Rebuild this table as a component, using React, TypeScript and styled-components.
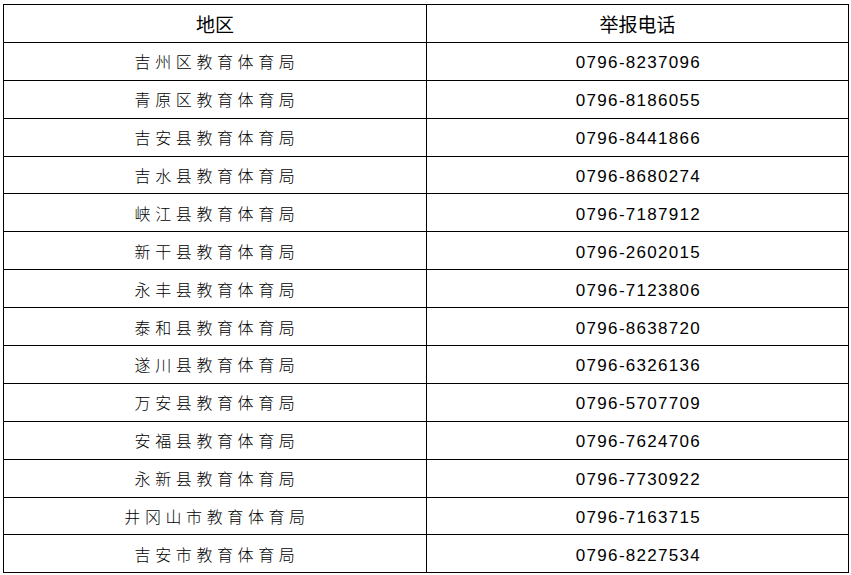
import styled, { createGlobalStyle } from "styled-components";

const GlobalStyle = createGlobalStyle`
    html, body {
        margin: 0;
        padding: 0;
        background: #fff;
    }
`

const Page = styled.div`
    padding: 4px 3px 0 3px;
`

const Table = styled.table`
    width: 845px;
    border-collapse: collapse;
    table-layout: fixed;
    color: #000;
`

const Row = styled.tr`
    height: 37.9px;
`

const HeadCell = styled.th`
    border: 1px solid #000;
    padding: 0;
    font-family: "Noto Sans CJK SC", sans-serif;
    font-size: 19px;
    font-weight: 400;
    text-align: center;
    vertical-align: middle;
`

const Cell = styled.td<{ $mono?: boolean }>`
    border: 1px solid #000;
    padding: ${p => p.$mono ? "3px 0 0 2px" : "0 0 0 4px"};
    text-align: center;
    vertical-align: middle;
    font-family: ${p => p.$mono ? `"Liberation Sans", Arial, sans-serif` : `"Noto Sans CJK SC", sans-serif`};
    font-size: ${p => p.$mono ? "17px" : "16px"};
    font-weight: 300;
    letter-spacing: ${p => p.$mono ? "1.3px" : "4.6px"};
    line-height: 1;
`

const rows: [string, string][] = [
    ["吉州区教育体育局", "0796-8237096"],
    ["青原区教育体育局", "0796-8186055"],
    ["吉安县教育体育局", "0796-8441866"],
    ["吉水县教育体育局", "0796-8680274"],
    ["峡江县教育体育局", "0796-7187912"],
    ["新干县教育体育局", "0796-2602015"],
    ["永丰县教育体育局", "0796-7123806"],
    ["泰和县教育体育局", "0796-8638720"],
    ["遂川县教育体育局", "0796-6326136"],
    ["万安县教育体育局", "0796-5707709"],
    ["安福县教育体育局", "0796-7624706"],
    ["永新县教育体育局", "0796-7730922"],
    ["井冈山市教育体育局", "0796-7163715"],
    ["吉安市教育体育局", "0796-8227534"],
]

export default function App() {
    return (<Page>
        <GlobalStyle />
        <Table>
            <colgroup>
                <col style={{ width: 423 }} />
                <col style={{ width: 422 }} />
            </colgroup>
            <thead>
                <Row>
                    <HeadCell>地区</HeadCell>
                    <HeadCell>举报电话</HeadCell>
                </Row>
            </thead>
            <tbody>
                {rows.map(([name, phone]) => (
                    <Row key={name}>
                        <Cell>{name}</Cell>
                        <Cell $mono>{phone}</Cell>
                    </Row>
                ))}
            </tbody>
        </Table>
    </Page>)
}
